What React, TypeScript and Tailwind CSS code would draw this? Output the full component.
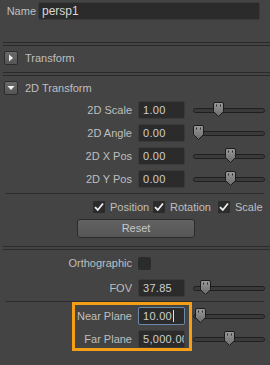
import * as React from "react";

const font = {fontFamily: '"Liberation Sans", Arial, sans-serif'};

function DoubleRule() {
  return <div className="ml-[3px] h-[4px] border-t border-b border-[#2a2a2a]" />;
}

function SingleRule() {
  return <div className="ml-[6px] w-[258px] h-px bg-[#2a2a2a]" />;
}

function Handle() {
  return (
    <svg width="11" height="15" viewBox="0 0 11 15">
      <defs>
        <linearGradient id="hg" x1="0" y1="0" x2="0" y2="1">
          <stop offset="0" stopColor="#9a9a9a" />
          <stop offset="1" stopColor="#6a6a6a" />
        </linearGradient>
      </defs>
      <path
        d="M2 0.5 H9 Q10.5 0.5 10.5 2 V9.5 L5.5 14.5 L0.5 9.5 V2 Q0.5 0.5 2 0.5 Z"
        fill="url(#hg)"
        stroke="#1c1c1c"
      />
      <rect x="3" y="2.5" width="1" height="2" fill="#2a2a2a" />
      <rect x="7" y="2.5" width="1" height="2" fill="#2a2a2a" />
    </svg>
  );
}

function Slider({at}: {at: number}) {
  return (
    <div className="relative w-[72px] h-[18px] flex items-center">
      <div className="w-full h-[5px] rounded-full bg-[#3a3a3a] border border-[#1f1f1f]" />
      <div className="absolute top-[1px]" style={{left: at}}>
        <Handle />
      </div>
    </div>
  );
}

function Field({value, focused}: {value: string; focused?: boolean}) {
  return (
    <div
      className={
        "w-[47px] h-[18px] rounded-[2px] bg-[#2b2b2b] pl-[4px] flex items-center overflow-hidden whitespace-nowrap tracking-[0.3px] text-[#cfcfcf] border " +
        (focused ? "border-[#6a88aa]" : "border-[#3a3a3a]")
      }
    >
      {value}
      {focused && <span className="ml-px w-px h-[12px] shrink-0 bg-[#e0e0e0]" />}
    </div>
  );
}

function NumRow({label, value, at}: {label: string; value: string; at: number}) {
  return (
    <div className="flex items-center h-[18px]">
      <div className="w-[132px] text-right">{label}</div>
      <div className="ml-[6px]">
        <Field value={value} />
      </div>
      <div className="ml-[8px]">
        <Slider at={at} />
      </div>
    </div>
  );
}

function Check({checked}: {checked?: boolean}) {
  return (
    <div className="w-[12px] h-[12px] rounded-[1px] bg-[#2b2b2b] flex items-center justify-center">
      {checked && (
        <svg width="10" height="10" viewBox="0 0 10 10">
          <path d="M1 5.2 L3.8 8 L9 1.5" fill="none" stroke="#eeeeee" strokeWidth="1.8" />
        </svg>
      )}
    </div>
  );
}

function Header({label, open}: {label: string; open?: boolean}) {
  return (
    <div className="flex items-center h-[14px]">
      <div className="ml-[4px] w-[14px] h-[14px] rounded-[2px] border border-[#2c2c2c] bg-gradient-to-b from-[#6a6a6a] to-[#555] flex items-center justify-center">
        <svg width="8" height="8" viewBox="0 0 8 8">
          {open ? (
            <path d="M0.5 2 H7.5 L4 6 Z" fill="#f2f2f2" />
          ) : (
            <path d="M2 0.5 V7.5 L6 4 Z" fill="#f2f2f2" />
          )}
        </svg>
      </div>
      <span className="ml-[7px]">{label}</span>
    </div>
  );
}

export default function App() {
  return (
    <div
      className="w-[270px] h-[365px] overflow-hidden bg-[#444444] text-[11px] text-[#bfbfbf]"
      style={font}
    >
      <div className="pt-[2px] flex items-center h-[20px]">
        <div className="w-[36px] text-right">Name</div>
        <div className="ml-[2px] w-[222px] h-[18px] rounded-[2px] bg-[#2b2b2b] border border-[#3a3a3a] pl-[3px] flex items-center text-[#d8d8d8] text-[12px]">
          persp1
        </div>
      </div>

      <div className="mt-[22px]">
        <DoubleRule />
      </div>
      <div className="mt-[5px]">
        <Header label="Transform" />
      </div>
      <div className="mt-[7px]">
        <DoubleRule />
      </div>
      <div className="mt-[5px]">
        <Header label="2D Transform" open />
      </div>

      <div className="mt-[6px] flex flex-col gap-[5px]">
        <NumRow label="2D Scale" value="1.00" at={20} />
        <NumRow label="2D Angle" value="0.00" at={0} />
        <NumRow label="2D X Pos" value="0.00" at={32} />
        <NumRow label="2D Y Pos" value="0.00" at={32} />
      </div>

      <div className="mt-[5px]">
        <SingleRule />
      </div>

      <div className="mt-[6px] h-[14px] flex items-center">
        <div className="ml-[93px] w-[60px] flex items-center gap-[5px]">
          <Check checked />
          <span>Position</span>
        </div>
        <div className="w-[65px] flex items-center gap-[5px]">
          <Check checked />
          <span>Rotation</span>
        </div>
        <div className="flex items-center gap-[5px]">
          <Check checked />
          <span>Scale</span>
        </div>
      </div>

      <div className="mt-[5px] ml-[77px] w-[118px] h-[19px] rounded-[3px] border border-[#2b2b2b] bg-gradient-to-b from-[#626262] to-[#565656] flex items-center justify-center text-[#c8c8c8]">
        Reset
      </div>

      <div className="mt-[8px]">
        <DoubleRule />
      </div>

      <div className="mt-[6px] flex items-center h-[14px]">
        <div className="w-[132px] text-right">Orthographic</div>
        <div className="ml-[6px] w-[13px] h-[13px] rounded-[2px] bg-[#2b2b2b]" />
      </div>

      <div className="mt-[9px]">
        <NumRow label="FOV" value="37.85" at={7} />
      </div>

      <div className="mt-[4px]">
        <SingleRule />
      </div>

      <div className="flex">
        <div className="ml-[72px] w-[120px] border-[3px] border-[#f59f16] pt-[2px] flex flex-col gap-[5px]">
          <div className="flex items-center h-[18px]">
            <div className="w-[57px] text-right">Near Plane</div>
            <div className="ml-[6px]">
              <Field value="10.00" focused />
            </div>
          </div>
          <div className="flex items-center h-[18px]">
            <div className="w-[57px] text-right">Far Plane</div>
            <div className="ml-[6px]">
              <Field value="5,000.00" />
            </div>
          </div>
        </div>
        <div className="ml-[1px] pt-[5px] flex flex-col gap-[5px]">
          <Slider at={2} />
          <Slider at={31} />
        </div>
      </div>
    </div>
  );
}
